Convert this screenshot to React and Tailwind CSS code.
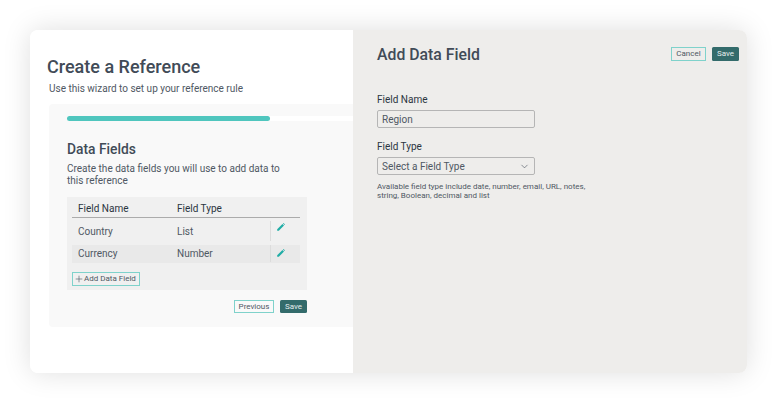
import { ChevronDown, Plus } from "lucide-react";

const rows = [
  { name: "Country", type: "List", cls: "h-[24px] pb-[4px]", iconCls: "mb-[9px]" },
  { name: "Currency", type: "Number", cls: "h-[18px] bg-[#e9e9e9] pb-[1px]", iconCls: "mb-[2px]" },
];

function Pencil({ className }) {
  return (
    <svg viewBox="0 0 8 8" className={`w-[8px] h-[8px] ${className}`}>
      <path d="M0.2 6.2 L5.4 1 L7 2.6 L1.8 7.8 L0.2 7.8 Z" fill="#20ada6" />
      <path d="M5.9 0.5 L6.5 0 L8 1.5 L7.5 2.1 Z" fill="#20ada6" />
    </svg>
  );
}

export default function App() {
  return (
    <div className="w-[777px] h-[403px] bg-white pt-[30px] pl-[30px] font-['Roboto',sans-serif] overflow-hidden">
      <div className="w-[717px] h-[343px] flex rounded-[8px] overflow-hidden shadow-[0_0_28px_rgba(0,0,0,0.13)]">
        {/* wizard */}
        <div className="w-[323px] shrink-0 bg-white pt-[25px] text-[#414b57]">
          <h1 className="ml-[17px] text-[18px] leading-[24px] font-medium">Create a Reference</h1>
          <p className="ml-[19px] mt-[3px] text-[10px] leading-[14px] text-[#4f5863]">
            Use this wizard to set up your reference rule
          </p>
          <div className="ml-[19px] mt-[8px] h-[223px] bg-[#f9f9f9] rounded-l-[4px] pt-[12px] pl-[18px]">
            <div className="h-[5px] bg-white rounded-l-full">
              <div className="w-[203px] h-[5px] bg-[#4fc6be] rounded-full" />
            </div>
            <h2 className="mt-[19px] text-[13.8px] leading-[18px] font-medium">Data Fields</h2>
            <p className="mt-[5px] w-[225px] text-[10px] leading-[12px] text-[#4f5863]">
              Create the data fields you will use to add data to this reference
            </p>
            <div className="mt-[10px] w-[240px] h-[93px] bg-[#f0f0f0] pt-[1px] px-[5px]">
              <div className="w-[228px] h-[20px] flex items-center pl-[6px] pt-[1px] border-b border-[#ababab] text-[10px] text-[#2b3541]">
                <span className="w-[99px]">Field Name</span>
                <span>Field Type</span>
              </div>
              <div className="w-[228px] mt-[3px] text-[10px] text-[#4f5863]">
                {rows.map((r) => (
                  <div key={r.name} className={`flex items-center pl-[6px] ${r.cls}`}>
                    <span className="w-[99px]">{r.name}</span>
                    <span className="w-[93px]">{r.type}</span>
                    <div className="self-stretch border-l border-[#dcdcdc] pl-[6px] flex items-center">
                      <Pencil className={r.iconCls} />
                    </div>
                  </div>
                ))}
              </div>
              <button className="mt-[9px] w-[68px] h-[14px] flex items-center pl-[1px] border border-[#7fd2cb] text-[8px] text-[#4f5863]">
                <Plus className="w-[10px] h-[10px] shrink-0" strokeWidth={1.5} />
                Add Data Field
              </button>
            </div>
            <div className="mt-[10px] w-[240px] flex justify-end gap-[6px]">
              <button className="w-[40px] h-[13px] flex items-center justify-center border border-[#7fd2cb] text-[8px] text-[#4f5863]">
                Previous
              </button>
              <button className="w-[27px] h-[13px] flex items-center justify-center bg-[#336b6b] rounded-[1.5px] text-[8px] text-[#e4eeee]">
                Save
              </button>
            </div>
          </div>
        </div>

        {/* add field panel */}
        <div className="flex-1 bg-[#eeedeb] pt-[15px] pl-[24px] pr-[8px] text-[#414b57]">
          <div className="flex items-start justify-between">
            <h1 className="text-[15.8px] leading-[20px] font-medium">Add Data Field</h1>
            <div className="flex gap-[6px] mt-[2px]">
              <button className="w-[35px] h-[14px] flex items-center justify-center border border-[#7fd2cb] text-[8px] text-[#4f5863]">
                Cancel
              </button>
              <button className="w-[27px] h-[14px] flex items-center justify-center bg-[#336b6b] rounded-[1.5px] text-[8px] text-[#e4eeee]">
                Save
              </button>
            </div>
          </div>
          <label className="block mt-[29px] text-[10px] leading-[12px] text-[#2b3541]">Field Name</label>
          <div className="mt-[4px] w-[158px] h-[18px] flex items-center pl-[4px] border border-[#b5b5b5] rounded-[2px] text-[10px] text-[#4f5863]">
            Region
          </div>
          <label className="block mt-[13px] text-[10px] leading-[12px] text-[#2b3541]">Field Type</label>
          <div className="mt-[4px] w-[158px] h-[18px] flex items-center justify-between pl-[4px] pr-[4px] border border-[#b5b5b5] rounded-[2px] text-[10px] text-[#4f5863]">
            Select a Field Type
            <ChevronDown className="w-[11px] h-[11px] text-[#39434f]" strokeWidth={1.25} />
          </div>
          <p className="mt-[7px] w-[220px] text-[8px] leading-[9px] text-[#4f5863]">
            Available field type include date, number, email, URL, notes, string, Boolean, decimal and list
          </p>
        </div>
      </div>
    </div>
  );
}
